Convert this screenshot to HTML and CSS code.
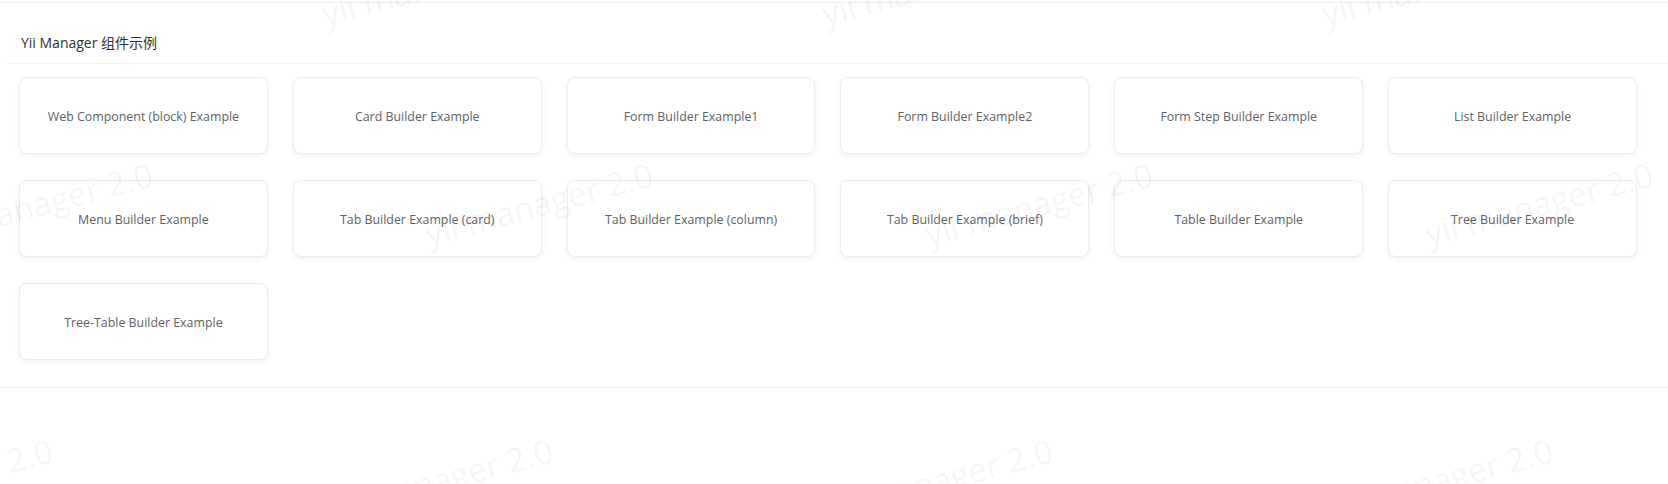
FILE: index.html
```html
<!DOCTYPE html>
<html lang="zh-CN">
<head>
  <meta charset="UTF-8">
  <title>Yii Manager 组件示例</title>
  <link rel="stylesheet" href="styles.css">
</head>
<body>
  <div class="panel">
    <div class="panel-header">Yii Manager 组件示例</div>
    <div class="panel-body">
      <div class="demo-card">Web Component (block) Example</div>
      <div class="demo-card">Card Builder Example</div>
      <div class="demo-card">Form Builder Example1</div>
      <div class="demo-card">Form Builder Example2</div>
      <div class="demo-card">Form Step Builder Example</div>
      <div class="demo-card">List Builder Example</div>
      <div class="demo-card">Menu Builder Example</div>
      <div class="demo-card">Tab Builder Example (card)</div>
      <div class="demo-card">Tab Builder Example (column)</div>
      <div class="demo-card">Tab Builder Example (brief)</div>
      <div class="demo-card">Table Builder Example</div>
      <div class="demo-card">Tree Builder Example</div>
      <div class="demo-card">Tree-Table Builder Example</div>
    </div>
  </div>

  <!-- 水印 -->
  <div class="watermark">
    <span class="wm wm-top" style="left:-173px">yii manager 2.0</span>
    <span class="wm wm-top" style="left:327px">yii manager 2.0</span>
    <span class="wm wm-top" style="left:827px">yii manager 2.0</span>
    <span class="wm wm-top" style="left:1327px">yii manager 2.0</span>
    <span class="wm wm-mid" style="left:-70px">yii manager 2.0</span>
    <span class="wm wm-mid" style="left:430px">yii manager 2.0</span>
    <span class="wm wm-mid" style="left:930px">yii manager 2.0</span>
    <span class="wm wm-mid" style="left:1430px">yii manager 2.0</span>
    <span class="wm wm-bot" style="left:-170px">yii manager 2.0</span>
    <span class="wm wm-bot" style="left:330px">yii manager 2.0</span>
    <span class="wm wm-bot" style="left:830px">yii manager 2.0</span>
    <span class="wm wm-bot" style="left:1330px">yii manager 2.0</span>
  </div>
</body>
</html>
```

FILE: styles.css
```css
body {
  margin: 0;
  background: #fff;
  font-family: "Open Sans", "Noto Sans CJK SC", sans-serif;
  color: #303133;
}
.panel {
  margin-top: 2px;
  border-top: 1px solid #ececf4;
  border-bottom: 1px solid #f0f0f2;
}
.panel-header {
  margin-left: 6px;
  padding: 30px 15px 10px;
  font-size: 14px;
  line-height: 20px;
  border-bottom: 1px solid #f2f2f5;
}
.panel-body {
  display: grid;
  grid-template-columns: repeat(6, 1fr);
  column-gap: 25px;
  row-gap: 26px;
  padding: 13px 31px 27px 19px;
}
.demo-card {
  height: 73px;
  padding-top: 2px;
  display: flex;
  align-items: center;
  justify-content: center;
  border: 1px solid #ebebf2;
  border-radius: 8px;
  box-shadow: 0 2px 6px rgba(0, 0, 0, 0.06);
  font-size: 12.4px;
  color: #606266;
  background: #fff;
}
.watermark {
  position: fixed;
  inset: 0;
  overflow: hidden;
  pointer-events: none;
}
.wm {
  position: absolute;
  font-size: 33px;
  line-height: 33px;
  white-space: nowrap;
  color: rgba(0, 0, 0, 0.04);
  transform: rotate(-15deg);
  transform-origin: 0 100%;
}
.wm-top {
  top: -3px;
}
.wm-mid {
  top: 217px;
}
.wm-bot {
  top: 493px;
}
```
